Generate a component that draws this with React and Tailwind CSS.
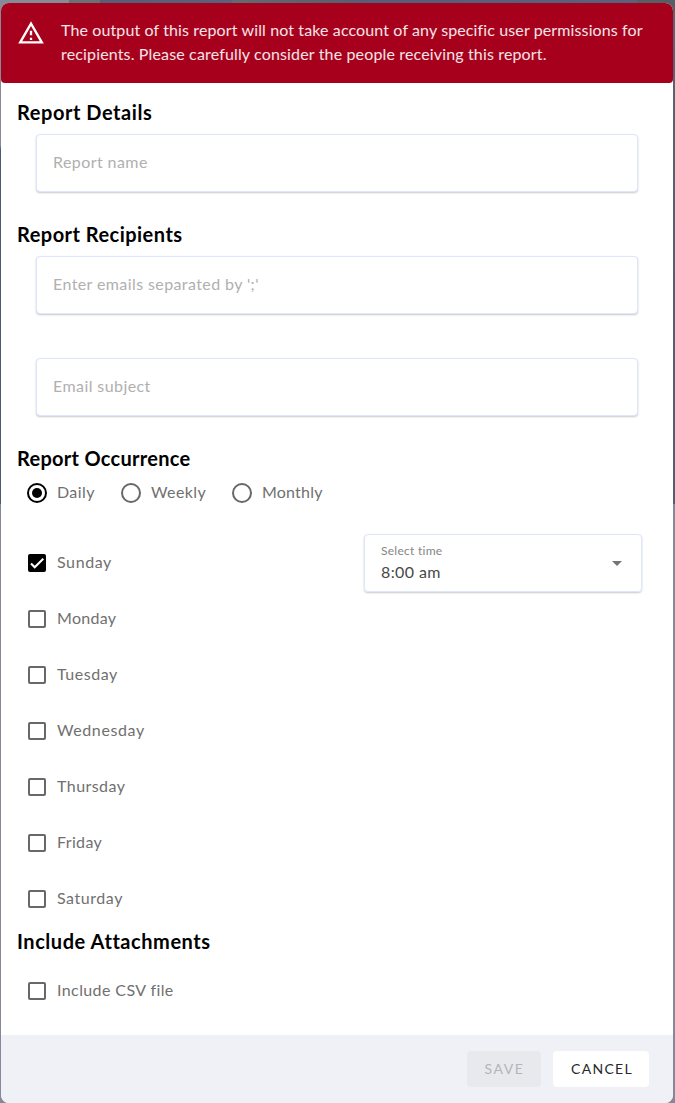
const headings = "flex h-7 items-center whitespace-nowrap pb-px text-[20px] leading-7 font-bold text-black";

function Field({ children, tracking }) {
  return (
    <div className="ml-[19px] flex h-[58px] w-[602px] items-center rounded-[4px] border border-[#dfe5fd] bg-white px-4 pb-[2px] shadow-[0_1px_2px_rgba(0,0,0,0.22)]">
      <span className={`whitespace-nowrap text-[16px] leading-6 text-[#b0b0b0] ${tracking}`}>{children}</span>
    </div>
  );
}

function CheckBox({ checked }) {
  return checked ? (
    <span className="flex size-[18px] items-center justify-center rounded-[2px] bg-black">
      <svg viewBox="0 0 24 24" className="size-[14px]" fill="none" stroke="white" strokeWidth="3.6">
        <path d="M1.73 12.91 8.1 19.28 22.79 4.59" />
      </svg>
    </span>
  ) : (
    <span className="size-[18px] rounded-[2px] border-2 border-[#686868]" />
  );
}

function CheckRow({ label, checked, tracking }) {
  return (
    <div className="flex h-14 items-center gap-[11px] pl-[11px]">
      <CheckBox checked={checked} />
      <span className={`whitespace-nowrap pb-[2px] text-[16px] leading-6 text-[#707070] ${tracking}`}>{label}</span>
    </div>
  );
}

function Radio({ label, checked, width, tracking }) {
  return (
    <div className={`flex items-center gap-[10px] ${width}`}>
      <span className={`flex size-5 shrink-0 items-center justify-center rounded-full border-2 ${checked ? "border-black" : "border-[#686868]"}`}>
        {checked && <span className="size-[10px] rounded-full bg-black" />}
      </span>
      <span className={`whitespace-nowrap pb-[2px] text-[16px] leading-6 text-[#707070] ${tracking}`}>{label}</span>
    </div>
  );
}

const days = [
  ["Sunday", "tracking-[0.6px]"],
  ["Monday", "tracking-[0.3px]"],
  ["Tuesday", "tracking-[0.55px]"],
  ["Wednesday", "tracking-[0.6px]"],
  ["Thursday", "tracking-[0.45px]"],
  ["Friday", "tracking-[0.35px]"],
  ["Saturday", "tracking-[0.55px]"],
];

export default function App() {
  return (
    <div className="h-[1103px] w-[675px] bg-[linear-gradient(90deg,#858c98_0,#858c98_69px,#6b7078_69px,#6b7078_100px,#555e76_100px,#59627c_232px,#626a72_232px,#5b626c_320px,#555e78_360px,#59627c_637px,#565e66_637px)] bg-[length:100%_12px] bg-no-repeat">
      <div className="flex h-[1103px] w-[675px] bg-[linear-gradient(180deg,transparent_0,transparent_12px,#858c98_12px,#858c98_145px,#4f5877_150px,#4f5877_504px,#858899_504px),linear-gradient(180deg,transparent_0,transparent_12px,#596270_12px,#555e70_504px,#858899_504px)] bg-[length:337px_100%,338px_100%] bg-[position:left_top,right_top] bg-no-repeat pt-[3px] pr-[2px] pl-px font-[Lato,sans-serif]">
        <div className="flex h-[1100px] w-[672px] flex-col overflow-hidden rounded-[8px] bg-white">
          <div className="flex h-20 shrink-0 items-start rounded-b-[4px] bg-[#a6001c] pt-4 pl-4">
            <svg viewBox="0 0 24 24" className="mr-4 size-7 shrink-0 fill-white">
              <path d="M12 5.99 19.53 19H4.47L12 5.99M12 2 1 21h22L12 2zm1 14h-2v2h2v-2zm0-6h-2v4h2v-4z" />
            </svg>
            <div className="-mt-px whitespace-nowrap text-[16px] leading-6 text-white/90">
              <div className="tracking-[0.12px]">The output of this report will not take account of any specific user permissions for</div>
              <div className="tracking-[0.15px]">recipients. Please carefully consider the people receiving this report.</div>
            </div>
          </div>
          <div className="flex flex-1 flex-col pt-[15px] pl-4">
            <h2 className={`tracking-[0.55px] ${headings}`}>Report Details</h2>
            <div className="mt-2"><Field tracking="tracking-[0.42px]">Report name</Field></div>
            <h2 className={`mt-7 tracking-[0.47px] ${headings}`}>Report Recipients</h2>
            <div className="mt-2"><Field tracking="tracking-[0.4px]">Enter emails separated by ';'</Field></div>
            <div className="mt-11"><Field tracking="tracking-[0.42px]">Email subject</Field></div>
            <h2 className={`mt-7 tracking-[0.28px] ${headings}`}>Report Occurrence</h2>
            <div className="mt-[11px] flex h-5 items-center pl-[10px]">
              <Radio label="Daily" checked width="w-[94px]" tracking="tracking-[0.4px]" />
              <Radio label="Weekly" width="w-[111px]" tracking="tracking-[0.4px]" />
              <Radio label="Monthly" width="w-[110px]" tracking="tracking-[0.2px]" />
            </div>
            <div className="mt-8 flex">
              <div className="w-[347px]">
                {days.map(([d, t], i) => (
                  <CheckRow key={d} label={d} checked={i === 0} tracking={t} />
                ))}
              </div>
              <div className="-mt-px flex h-[58px] w-[278px] items-center justify-between rounded-[4px] border border-[#dfe5fd] pr-[19px] pl-4 shadow-[0_1px_2px_rgba(0,0,0,0.22)]">
                <div className="whitespace-nowrap">
                  <div className="text-[12px] leading-[18px] tracking-[0.27px] text-[#858585]">Select time</div>
                  <div className="text-[16px] leading-6 tracking-[0.4px] text-[#484848]">8:00 am</div>
                </div>
                <svg viewBox="0 0 10 5" className="h-[5px] w-[10px] fill-[#757575]"><path d="M0 0h10L5 5z" /></svg>
              </div>
            </div>
            <h2 className={`tracking-[0.55px] ${headings}`}>Include Attachments</h2>
            <div className="mt-2"><CheckRow label="Include CSV file" tracking="tracking-[0.4px]" /></div>
          </div>
          <div className="flex h-[68px] shrink-0 items-center justify-end gap-3 bg-[#f0f1f6] pr-6">
            <button className="h-9 w-[74px] rounded-[4px] bg-[#e8e9ed] pb-[2px] pl-px text-[14px] tracking-[1.6px] text-[#b4b5b9]">SAVE</button>
            <button className="h-9 w-24 rounded-[4px] bg-white pb-[2px] pl-[2px] text-[14px] tracking-[1.3px] text-[#282828]">CANCEL</button>
          </div>
        </div>
      </div>
    </div>
  );
}
